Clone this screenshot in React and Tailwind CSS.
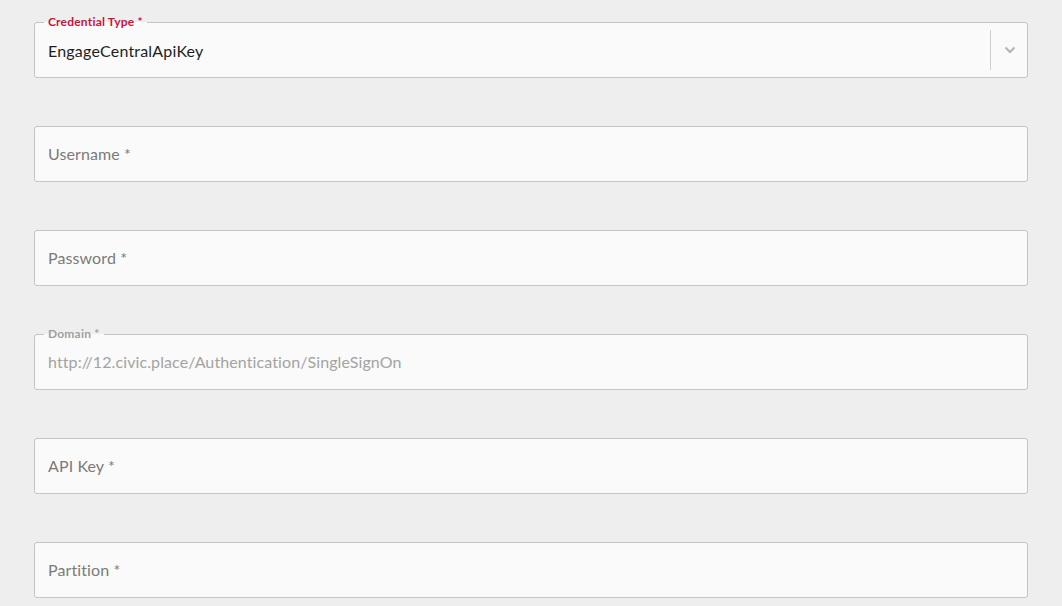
import React from "react";

function Field({ label, labelClass, children, select }) {
  return (
    <div className="relative h-[56px] rounded-[3px] border border-[#c4c4c4] bg-[#fafafa] flex items-center">
      {label && (
        <span
          className={`absolute left-[9px] top-[-8px] px-[4px] text-[12px] leading-[14px] font-bold tracking-[0.2px] ${labelClass}`}
          style={{ background: "linear-gradient(#eeeeee 50%, #fafafa 50%)" }}
        >
          {label}
        </span>
      )}
      <div className={`flex-1 pl-[13px] text-[16px] leading-[20px] tracking-[0.1px] ${select ? "pt-[2px]" : ""}`}>{children}</div>
      {select && (
        <div className="flex items-center h-full">
          <div className="w-px h-[40px] bg-[#cfcfcf]" />
          <div className="w-[36px] flex items-center justify-center pl-[1px]">
            <svg width="12" height="8" viewBox="0 0 12 8">
              <path d="M1.5 1.5 L6 6 L10.5 1.5" fill="none" stroke="#b3b3b3" strokeWidth="2" />
            </svg>
          </div>
        </div>
      )}
    </div>
  );
}

export default function App() {
  return (
    <div
      className="w-[1062px] h-[606px] bg-[#eeeeee] overflow-hidden pl-[34px] pr-[34px] pt-[22px] flex flex-col gap-[48px]"
      style={{ fontFamily: "Lato, 'Open Sans', sans-serif" }}
    >
      <Field label="Credential Type *" labelClass="text-[#d0103a]" select>
        <span className="text-[#1e1e1e] tracking-[0.2px]">EngageCentralApiKey</span>
      </Field>
      <Field>
        <span className="text-[#7a7a7a]">Username *</span>
      </Field>
      <Field>
        <span className="text-[#7a7a7a]">Password *</span>
      </Field>
      <Field label="Domain *" labelClass="text-[#a0a0a0]">
        <span className="text-[#a3a3a3]">http://12.civic.place/Authentication/SingleSignOn</span>
      </Field>
      <Field>
        <span className="text-[#7a7a7a]">API Key *</span>
      </Field>
      <Field>
        <span className="text-[#7a7a7a]">Partition *</span>
      </Field>
    </div>
  );
}
